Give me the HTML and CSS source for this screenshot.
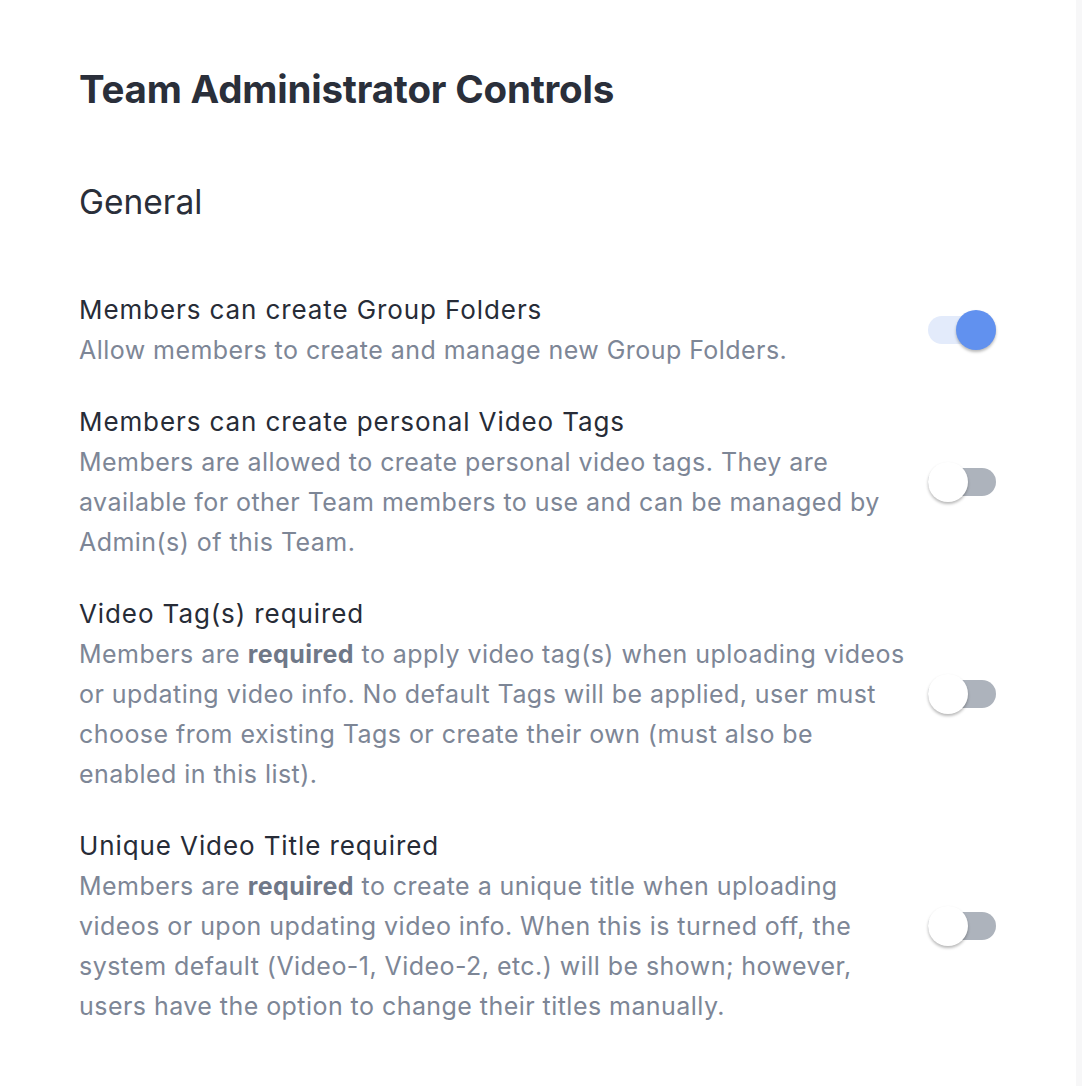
FILE: index.html
```html
<!DOCTYPE html>
<html lang="en">
<head>
<meta charset="utf-8">
<title>Team Administrator Controls</title>
<link rel="stylesheet" href="styles.css">
</head>
<body>
<div class="frame">
  <main class="page">
    <h1 class="title">Team Administrator Controls</h1>
    <h2 class="section">General</h2>
    <div class="rows">
      <div class="row">
        <div class="text">
          <div class="label">Members can create Group Folders</div>
          <div class="desc">Allow members to create and manage new Group Folders.</div>
        </div>
        <div class="toggle on"><span class="knob"></span></div>
      </div>
      <div class="row">
        <div class="text">
          <div class="label">Members can create personal Video Tags</div>
          <div class="desc">Members are allowed to create personal video tags. They are available for other Team members to use and can be managed by Admin(s) of this Team.</div>
        </div>
        <div class="toggle"><span class="knob"></span></div>
      </div>
      <div class="row">
        <div class="text">
          <div class="label">Video Tag(s) required</div>
          <div class="desc">Members are <b>required</b> to apply video tag(s) when uploading videos or updating video info. No default Tags will be applied, user must choose from existing Tags or create their own (must also be enabled in this list).</div>
        </div>
        <div class="toggle"><span class="knob"></span></div>
      </div>
      <div class="row">
        <div class="text">
          <div class="label">Unique Video Title required</div>
          <div class="desc">Members are <b>required</b> to create a unique title when uploading videos or upon updating video info. When this is turned off, the system default (Video-1, Video-2, etc.) will be shown; however, users have the option to change their titles manually.</div>
        </div>
        <div class="toggle"><span class="knob"></span></div>
      </div>
    </div>
  </main>
  <div class="scrolltrack"></div>
</div>
</body>
</html>
```

FILE: styles.css
```css
html, body {
  margin: 0;
  padding: 0;
  background: #ffffff;
}
body {
  font-family: Inter, "Noto Sans", sans-serif;
  color: #272c37;
}
.frame {
  display: flex;
  min-height: 1086px;
}
.page {
  flex: 1;
  padding: 66px 80px 0 79px;
}
.scrolltrack {
  width: 6px;
  background: #f7f7f8;
}
.title {
  margin: 0 0 70px;
  font-size: 38.5px;
  line-height: 46px;
  font-weight: 700;
  color: #2a2f3a;
  letter-spacing: -0.2px;
}
.section {
  margin: 0 0 68px;
  font-size: 33.5px;
  line-height: 40px;
  font-weight: 400;
  color: #2a2f3a;
}
.rows {
  display: flex;
  flex-direction: column;
  gap: 32px;
}
.row {
  display: flex;
  align-items: center;
  gap: 16px;
}
.text {
  flex: 1;
  min-width: 0;
}
.label {
  font-size: 26px;
  line-height: 40px;
  letter-spacing: 0.9px;
  color: #272c37;
}
.desc {
  font-size: 25px;
  line-height: 40px;
  letter-spacing: 0.45px;
  color: #7d8696;
}
.desc b {
  font-weight: 700;
  color: #6f7888;
}
.toggle {
  position: relative;
  flex: none;
  width: 68px;
  height: 28px;
  border-radius: 14px;
  background: #adb3bc;
}
.toggle .knob {
  position: absolute;
  top: -6px;
  left: 0;
  width: 40px;
  height: 40px;
  border-radius: 50%;
  background: #ffffff;
  box-shadow: 0 2px 3px rgba(0, 0, 0, 0.28);
}
.toggle.on {
  background: #e3ebfb;
}
.toggle.on .knob {
  left: 28px;
  background: #6191ef;
}
```
